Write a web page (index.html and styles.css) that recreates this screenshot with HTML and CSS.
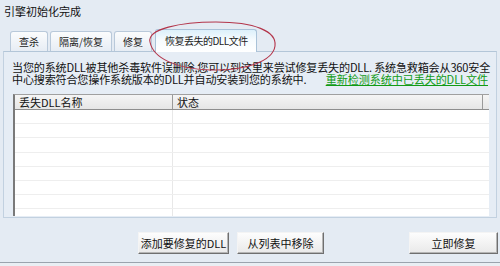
FILE: index.html
```html
<!DOCTYPE html>
<html lang="zh-CN">
<head>
<meta charset="utf-8">
<link rel="stylesheet" href="styles.css">
</head>
<body>
<div class="app">
  <div class="title">引擎初始化完成</div>
  <div class="tabs">
    <div class="tab">查杀</div>
    <div class="tab">隔离/恢复</div>
    <div class="tab">修复</div>
    <div class="tab active">恢复丢失的DLL文件</div>
  </div>
  <div class="panel">
    <div class="desc">
      <div class="line">当您的系统DLL被其他杀毒软件误删除,您可以到这里来尝试修复丢失的DLL. 系统急救箱会从360安全</div>
      <div class="line line2"><span>中心搜索符合您操作系统版本的DLL并自动安装到您的系统中.</span><a class="link" href="#">重新检测系统中已丢失的DLL文件</a></div>
    </div>
    <div class="table">
      <div class="thead">
        <div class="th c1">丢失DLL名称</div>
        <div class="th c2">状态</div>
        <div class="th c3"></div>
      </div>
      <div class="tbody">
        <div class="row"><div class="td c1"></div><div class="td c2"></div></div>
        <div class="row"><div class="td c1"></div><div class="td c2"></div></div>
        <div class="row"><div class="td c1"></div><div class="td c2"></div></div>
        <div class="row"><div class="td c1"></div><div class="td c2"></div></div>
        <div class="row"><div class="td c1"></div><div class="td c2"></div></div>
        <div class="row"><div class="td c1"></div><div class="td c2"></div></div>
        <div class="row"><div class="td c1"></div><div class="td c2"></div></div>
        <div class="row"><div class="td c1"></div><div class="td c2"></div></div>
      </div>
    </div>
  </div>
  <div class="actions">
    <button class="btn b1">添加要修复的DLL</button>
    <button class="btn b2">从列表中移除</button>
    <button class="btn b3">立即修复</button>
  </div>
  <div class="bottom"></div>
  <svg class="mark" width="500" height="266" viewBox="0 0 500 266">
    <path d="M150 42 C147 29 180 22 216 22 C254 22 277 31 275 46 C273 61 246 71 210 70 C176 69 153 58 150 42 Z" fill="none" stroke="#b3354a" stroke-width="1.1"/>
  </svg>
</div>
</body>
</html>
```
FILE: styles.css
```css
* { box-sizing: border-box; }
html, body { margin: 0; padding: 0; }
body {
  width: 500px;
  height: 266px;
  overflow: hidden;
  background: #e4ebf3;
  font-family: "Noto Sans CJK SC", "Liberation Sans", sans-serif;
  font-size: 11px;
  color: #111;
}
.app {
  position: relative;
  width: 500px;
  height: 266px;
  display: flex;
  flex-direction: column;
}
.title {
  height: 24px;
  padding: 3px 0 0 4px;
  font-size: 11px;
  line-height: 16px;
}
.tabs {
  display: flex;
  align-items: flex-end;
  padding-left: 10px;
  height: 27px;
  gap: 2px;
}
.tab {
  height: 20px;
  padding: 0 8px;
  line-height: 19px;
  font-size: 10px;
  border: 1px solid #b9c9da;
  border-bottom: none;
  border-radius: 3px 3px 0 0;
  background: linear-gradient(#fbfcfd, #e7edf4);
  color: #222;
}
.tab.active {
  height: 23px;
  line-height: 22px;
  padding: 0 8px 0 9px;
  margin-left: 1px;
  letter-spacing: -0.5px;
  background: linear-gradient(#dcf0fb, #f6fbfe 45%, #ffffff);
  border-color: #a9c2d8;
  position: relative;
  top: 1px;
}
.panel {
  margin: 0 3px;
  height: 167px;
  border: 1px solid #c2d1e0;
  border-top-color: #b3c6d8;
  background: #e6edf5;
  padding: 9px 0 0 8px;
}
.desc {
  font-size: 11.1px;
  line-height: 12px;
  letter-spacing: -0.2px;
  white-space: nowrap;
}
.line2 {
  display: flex;
  padding-right: 8px;
}
.link {
  margin-left: auto;
  color: #119b15;
  text-decoration: underline;
  letter-spacing: -0.1px;
}
.table {
  margin-top: 9px;
  margin-left: 1px;
  width: 476px;
  height: 122px;
  background: #fff;
  border-left: 2px solid #7a7a7a;
  border-top: 1px solid #a0a0a0;
  overflow: hidden;
}
.thead {
  display: flex;
  height: 15px;
  background: linear-gradient(#f5f5f5, #e6e6e6);
  border-bottom: 1px solid #8e8e8e;
}
.th {
  line-height: 14px;
  padding-left: 4px;
  border-right: 1px solid #9a9a9a;
  font-size: 11px;
}
.c1 { width: 158px; }
.c2 { width: 310px; }
.th.c3 { width: 6px; padding: 0; border-right: none; }
.row {
  display: flex;
  height: 14.2px;
  border-bottom: 1px solid #eeeeee;
}
.td { height: 100%; }
.td.c1 { border-right: 1px solid #e8e8e8; }
.actions {
  display: flex;
  padding: 14px 2px 0 138px;
  height: 44px;
}
.btn {
  height: 22px;
  font-family: "Noto Sans CJK SC", "Liberation Sans", sans-serif;
  font-size: 11px;
  color: #111;
  background: linear-gradient(#fdfdfd, #e9e9e9);
  border: 1px solid #f4f4f4;
  border-right-color: #6f6f6f;
  border-bottom-color: #6f6f6f;
  box-shadow: inset -1px -1px 0 #b5b5b5;
  padding: 0;
  line-height: 18px;
}
.b1 { width: 91px; }
.b2 { width: 87px; margin-left: 8px; }
.b3 { width: 89px; margin-left: auto; }
.bottom {
  margin-top: auto;
  height: 4px;
  border-top: 1px solid #9aa3ad;
  background: #e9eef3;
}
.mark {
  position: absolute;
  left: 0;
  top: 0;
  pointer-events: none;
}
```
